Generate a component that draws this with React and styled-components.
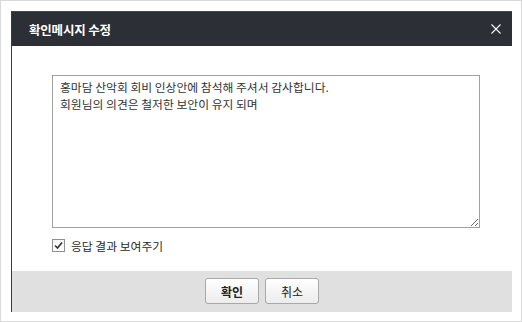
import React from 'react';
import styled, { createGlobalStyle } from 'styled-components';

const GlobalStyle = createGlobalStyle`
  html, body {
    margin: 0;
    padding: 0;
    background: #ffffff;
  }
  body {
    font-family: 'Noto Sans CJK KR', 'Noto Sans', sans-serif;
  }
`;

const Frame = styled.div`
  box-sizing: border-box;
  width: 522px;
  height: 322px;
  border: 1px solid #d9d9d9;
  padding: 10px 9px 9px 10px;
  background: #ffffff;
`;

const Dialog = styled.div`
  height: 301px;
  display: flex;
  flex-direction: column;
  border-left: 1px solid #3a3d42;
  background: #ffffff;
`;

const Header = styled.div`
  height: 35px;
  display: flex;
  align-items: center;
  justify-content: space-between;
  padding: 0 11px 0 17px;
  background: #2c2f35;
  border-top: 1px solid #45484d;
  box-sizing: border-box;
`;

const Title = styled.h1`
  margin: 0;
  font-size: 12.5px;
  font-weight: 700;
  color: #ffffff;
  letter-spacing: -0.2px;
`;

const CloseButton = styled.button`
  width: 11px;
  height: 11px;
  padding: 0;
  border: 0;
  background: none;
  display: flex;
  align-items: center;
  justify-content: center;
  cursor: pointer;
`;

const Body = styled.div`
  flex: 1;
  padding: 29px 0 0 40px;
  display: flex;
  flex-direction: column;
`;

const MessageBox = styled.textarea`
  box-sizing: border-box;
  width: 428px;
  height: 153px;
  margin: 0;
  padding: 2px 7px;
  border: 1px solid #a0a0a0;
  font-family: 'Noto Sans CJK KR', 'Noto Sans', sans-serif;
  font-size: 11.8px;
  line-height: 17px;
  color: #333333;
  resize: both;
  outline: none;
`;

const CheckRow = styled.label`
  display: flex;
  align-items: center;
  gap: 6px;
  margin-top: 9px;
  font-size: 11.8px;
  color: #2a2a2a;
`;

const CheckBox = styled.span`
  box-sizing: border-box;
  width: 13px;
  height: 13px;
  border: 1px solid #8f8f8f;
  background: linear-gradient(#f4f4f4, #ffffff);
  display: flex;
  align-items: center;
  justify-content: center;
`;

const Footer = styled.div`
  height: 41px;
  background: #e0e0e0;
  display: flex;
  justify-content: center;
  align-items: flex-start;
  gap: 6px;
  padding-top: 7px;
  box-sizing: border-box;
`;

const Button = styled.button`
  width: 54px;
  height: 26px;
  padding: 0;
  border: 1px solid #a9a9a9;
  border-radius: 3px;
  background: linear-gradient(#ffffff, #ececec);
  font-family: 'Noto Sans CJK KR', 'Noto Sans', sans-serif;
  font-size: 12px;
  font-weight: ${(p) => (p.$primary ? 700 : 400)};
  color: #222222;
  cursor: pointer;
`;

export default function App() {
  return (
    <>
      <GlobalStyle />
      <Frame>
        <Dialog>
          <Header>
            <Title>확인메시지 수정</Title>
            <CloseButton aria-label="닫기">
              <svg width="10" height="10" viewBox="0 0 10 10">
                <path d="M0.5 0.5 L9.5 9.5 M9.5 0.5 L0.5 9.5" stroke="#ffffff" strokeWidth="1.1" />
              </svg>
            </CloseButton>
          </Header>
          <Body>
            <MessageBox
              defaultValue={'홍마담 산악회 회비 인상안에 참석해 주셔서 감사합니다.\n회원님의 의견은 철저한 보안이 유지 되며'}
            />
            <CheckRow>
              <CheckBox>
                <svg width="9" height="9" viewBox="0 0 9 9">
                  <path d="M1 4.5 L3.5 7 L8 1.5" fill="none" stroke="#333333" strokeWidth="1.6" />
                </svg>
              </CheckBox>
              응답 결과 보여주기
            </CheckRow>
          </Body>
          <Footer>
            <Button $primary>확인</Button>
            <Button>취소</Button>
          </Footer>
        </Dialog>
      </Frame>
    </>
  );
}
